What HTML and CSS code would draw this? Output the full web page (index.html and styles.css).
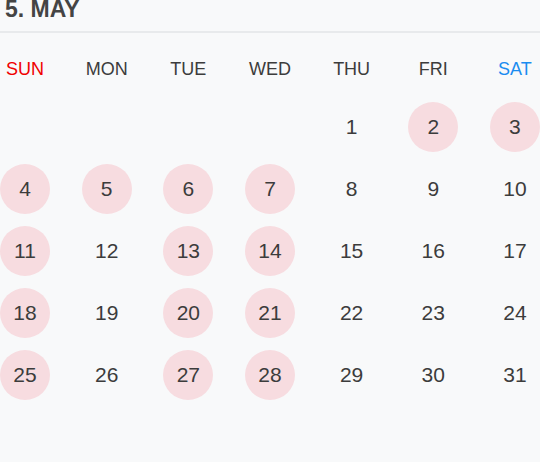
FILE: index.html
```html
<!DOCTYPE html>
<html lang="en">
  <head>
    <meta charset="UTF-8" />
    <meta name="viewport" content="width=device-width, initial-scale=1.0" />
    <title>May</title>
    <link rel="stylesheet" href="styles.css">
  </head>
  <body>
    <header class="month">5. MAY</header>
    <div class="calendar">
      <div class="week-head">
        <span class="sun">SUN</span>
        <span>MON</span>
        <span>TUE</span>
        <span>WED</span>
        <span>THU</span>
        <span>FRI</span>
        <span class="sat">SAT</span>
      </div>
      <div class="days">
        <span></span><span></span><span></span><span></span>
        <span>1</span><span class="mark">2</span><span class="mark">3</span>
        <span class="mark">4</span><span class="mark">5</span><span class="mark">6</span><span class="mark">7</span><span>8</span><span>9</span><span>10</span>
        <span class="mark">11</span><span>12</span><span class="mark">13</span><span class="mark">14</span><span>15</span><span>16</span><span>17</span>
        <span class="mark">18</span><span>19</span><span class="mark">20</span><span class="mark">21</span><span>22</span><span>23</span><span>24</span>
        <span class="mark">25</span><span>26</span><span class="mark">27</span><span class="mark">28</span><span>29</span><span>30</span><span>31</span>
      </div>
    </div>
  </body>
</html>
```

FILE: styles.css
```css
body,
html {
  margin: 0;
  height: 100%;
}

body {
  background-color: #f8f9fa;
  font-family: "Liberation Sans", Arial, sans-serif;
  color: #3c3c3c;
}

.month {
  height: 31px;
  padding: 0 5px;
  font-size: 23px;
  line-height: 19px;
  font-weight: bold;
  color: #444;
  border-bottom: 2px solid #e8eaec;
}

.calendar {
  padding-top: 18px;
}

.week-head,
.days {
  display: grid;
  grid-template-columns: repeat(7, 50px);
  justify-content: space-between;
}

.week-head span {
  height: 36px;
  line-height: 36px;
  font-size: 18px;
  text-align: center;
  white-space: nowrap;
}

.week-head .sun {
  color: #f00000;
}

.week-head .sat {
  color: #1a8cf0;
}

.days {
  margin-top: 15px;
  row-gap: 12px;
}

.days span {
  height: 50px;
  line-height: 50px;
  font-size: 21px;
  text-align: center;
  border-radius: 50%;
}

.days .mark {
  background-color: #f7dce0;
}
```
